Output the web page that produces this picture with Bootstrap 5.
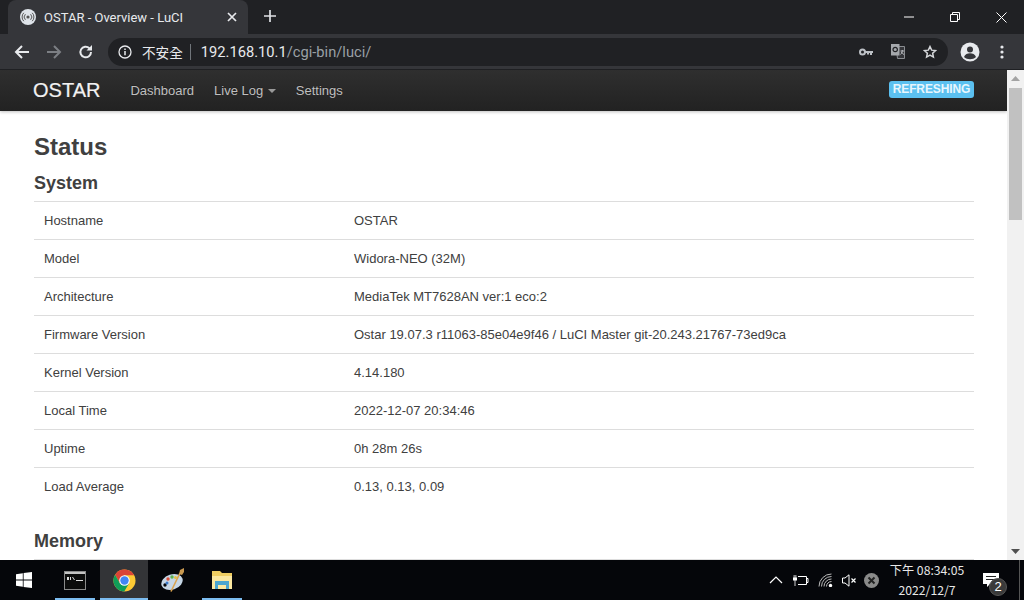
<!DOCTYPE html>
<html lang="en">
<head>
<meta charset="utf-8">
<title>OSTAR - Overview - LuCI</title>
<link href="https://cdn.jsdelivr.net/npm/bootstrap@5.3.0/dist/css/bootstrap.min.css" rel="stylesheet">
<style>
html,body{height:600px;overflow:hidden}
body{background:#fff;font-family:"Liberation Sans",Arial,sans-serif;color:#404040}
.shell{width:1024px;height:600px}
.tabstrip{height:34px;background:#202124;padding-left:8px}
.browser-tab{width:240px;height:34px;background:#35363a;border-radius:8px 8px 0 0;padding:0 11px 0 12px;color:#e8eaed;font:13px "Roboto","Liberation Sans",sans-serif}
.tab-title{width:183px;margin-left:8px;white-space:nowrap}
.newtab{width:28px;height:28px;margin-left:8px}
.win-btns{margin-left:auto}
.win-btn{width:46px;height:34px}
.toolbar{height:36px;background:#35363a;border-bottom:1px solid #1f2023;padding-left:7px}
.tool-btn{width:30px;height:30px}
.tool-gap{margin-left:2px}
.omni{width:840px;height:28px;background:#202124;border-radius:14px;margin:0 7px;padding:0 11px 0 10px;font:14.7px "Roboto","Liberation Sans",sans-serif;color:#9aa0a6;white-space:nowrap}
.omni-warn{font:13.6px "Noto Sans CJK TC","Noto Sans CJK SC",sans-serif;color:#e8eaed;margin-left:10px}
.omni-sep{width:1px;height:16px;background:#70757a;margin:0 10px 0 7px}
.omni-host{color:#e8eaed}
.omni-end{margin-left:auto;gap:18px}
.pagewrap{height:490px}
.pagemain{width:1007px;height:490px;overflow:hidden}
.luci-nav{height:41px;background:linear-gradient(#2f2f2f,#222);padding:0 33px;box-shadow:0 1px 3px rgba(0,0,0,.25);position:relative}
.luci-brand{font-size:20px;color:#f2f2f2;margin:0 30px 2px 0;-webkit-text-stroke:.2px #f2f2f2}
.luci-link{font-size:13px;color:#bfbfbf;margin-right:20px;text-decoration:none;text-shadow:0 -1px 0 rgba(0,0,0,.25)}
.luci-caret{display:inline-block;border-top:4px solid #999;border-left:4px solid transparent;border-right:4px solid transparent;vertical-align:2px;margin-left:1px}
.refresh-pill{margin:0 0 2px auto;background:#5bc0f0;color:#e8f6fd;font-size:12px;font-weight:700;border-radius:3px;padding:0 3px;height:17px;line-height:17px;width:85px;white-space:nowrap;letter-spacing:-.1px}
.content-area{padding:0 33px 0 34px}
.page-title{font-size:24px;font-weight:700;line-height:28px;margin:22px 0 11px;color:#404040}
.sect-title{font-size:18px;font-weight:700;line-height:22px;margin:0 0 7px;color:#404040}
.info-table{width:100%;margin-bottom:24px;font-size:13px;table-layout:fixed;border-collapse:collapse}
.info-table td{height:38px;padding:0 10px;border-top:1px solid #ddd;color:#404040;vertical-align:middle}
.info-table td:first-child{width:310px}
.vscroll{width:17px;height:490px;background:#f1f1f1}
.vscroll-track{flex:1}
.vscroll-cap{height:17px}
.vthumb{height:132px;background:#c1c1c1;width:13px;margin:1px 0 0 2px}
.taskbar{height:40px;background:#05060a}
.task-item{height:40px;width:48px;position:relative}
.task-run::after{content:"";position:absolute;left:4px;right:4px;bottom:0;height:2px;background:#7cbcf0}
.task-focus{background:#333437;margin-left:1px}
.task-focus::after{content:"";position:absolute;left:0;right:0;bottom:0;height:2px;background:#7cbcf0}
.task-cmd{margin-left:3px}
.task-paint{width:50px}
.tray{margin-left:auto;height:40px;color:#fff}
.tray-icon{margin-right:9px}
.tray-icon-tight{margin-right:7px}
.clock{width:94px;margin-left:-8px;text-align:center;font:12.2px/20px "Noto Sans CJK TC","Noto Sans CJK SC",sans-serif;color:#e8e8e8;white-space:nowrap}
.notif{width:34px;height:40px;position:relative}
.notif-badge{position:absolute;left:15px;top:18px;width:18px;height:18px;border-radius:50%;background:#3a3a3a;border:1px solid #555;color:#fff;font-size:13px;line-height:16px;text-align:center}
.show-desktop{width:5px;height:40px;margin-left:11px;border-left:1px solid #555}
</style>
</head>
<body>
<div class="shell d-flex flex-column">
  <div class="tabstrip d-flex align-items-end">
    <div class="browser-tab d-flex align-items-center">
      <svg width="16" height="16" viewBox="0 0 16 16"><circle cx="8" cy="8" r="8" fill="#dfe4ea"/><circle cx="8" cy="8" r="1.6" fill="#555"/><path d="M5.400 5.200a4 4 0 0 0 0 5.600M10.600 5.200a4 4 0 0 1 0 5.600M3.800 3.800a6 6 0 0 0 0 8.400M12.200 3.800a6 6 0 0 1 0 8.400" fill="none" stroke="#555" stroke-width="1"/></svg>
      <span class="tab-title">OSTAR - Overview - LuCI</span>
      <svg width="10" height="10" viewBox="0 0 10 10"><path d="M1 1l8 8M9 1l-8 8" stroke="#e8eaed" stroke-width="1.7"/></svg>
    </div>
    <div class="newtab d-flex align-items-center justify-content-center mb-1">
      <svg width="12" height="12" viewBox="0 0 12 12"><path d="M6 0v12M0 6h12" stroke="#dfe1e5" stroke-width="1.7"/></svg>
    </div>
    <div class="win-btns d-flex align-self-start">
      <div class="win-btn d-flex align-items-center justify-content-center"><svg width="10" height="10" viewBox="0 0 10 10"><path d="M0 5h10" stroke="#fff"/></svg></div>
      <div class="win-btn d-flex align-items-center justify-content-center"><svg width="10" height="10" viewBox="0 0 10 10"><path d="M.5 2.500h7v7h-7zM2.500 2.500v-2h7v7h-2" fill="none" stroke="#fff"/></svg></div>
      <div class="win-btn d-flex align-items-center justify-content-center"><svg width="11" height="11" viewBox="0 0 11 11"><path d="M.5.500l10 10M10.500.500l-10 10" stroke="#fff"/></svg></div>
    </div>
  </div>
  <div class="toolbar d-flex align-items-center">
    <div class="tool-btn d-flex align-items-center justify-content-center"><svg width="16" height="16" viewBox="0 0 16 16"><path d="M15 8H2M8 2L2 8l6 6" fill="none" stroke="#e8eaed" stroke-width="2"/></svg></div>
    <div class="tool-btn tool-gap d-flex align-items-center justify-content-center"><svg width="16" height="16" viewBox="0 0 16 16"><path d="M1 8h13M8 2l6 6-6 6" fill="none" stroke="#7c7f84" stroke-width="2"/></svg></div>
    <div class="tool-btn tool-gap d-flex align-items-center justify-content-center"><svg width="16" height="16" viewBox="0 0 16 16"><path d="M13 8a5.300 5.300 0 1 1-1.600-3.800" fill="none" stroke="#e8eaed" stroke-width="2"/><path d="M14 1v5.500H8.500z" fill="#e8eaed"/></svg></div>
    <div class="omni d-flex align-items-center">
      <svg width="14" height="14" viewBox="0 0 14 14"><circle cx="7" cy="7" r="6" fill="none" stroke="#e8eaed" stroke-width="1.300"/><path d="M7 6v4.200M7 3.500v1.500" stroke="#e8eaed" stroke-width="1.500"/></svg>
      <span class="omni-warn">不安全</span><span class="omni-sep"></span>
      <span><span class="omni-host">192.168.10.1</span>/cgi-bin/luci/</span>
      <div class="omni-end d-flex align-items-center">
        <svg width="14" height="8" viewBox="0 0 14 8"><circle cx="3.500" cy="4" r="2.500" fill="none" stroke="#bdc1c6" stroke-width="2"/><path d="M6 3h8v2h-1v2h-2V5h-1v1.500H8V5H6z" fill="#bdc1c6"/></svg>
        <svg width="14" height="15" viewBox="0 0 14 15"><path d="M5 2.500h8.500V14.500H6.500z" fill="#35363a" stroke="#8a8d91"/><rect x="0" y="0" width="8.500" height="11.500" fill="#a5a8ac"/><circle cx="4.200" cy="5.500" r="2.200" fill="none" stroke="#202124" stroke-width="1.200"/><path d="M9.500 7h3.500M11.300 6c0 2.500-1 3.800-1.800 4.500M10.500 8c.5 1 1.300 2 2.500 2.500" stroke="#c4c7cb" fill="none" stroke-width=".9"/></svg>
        <svg width="14" height="14" viewBox="0 0 16 16"><path d="M8 1.800l1.900 4.100 4.400.5-3.300 3 .9 4.400L8 11.600l-3.900 2.200.9-4.400-3.300-3 4.400-.5z" fill="none" stroke="#d5d7da" stroke-width="1.700"/></svg>
      </div>
    </div>
    <div class="tool-btn d-flex align-items-center justify-content-center"><svg width="20" height="20" viewBox="0 0 20 20"><circle cx="10" cy="10" r="9.500" fill="#e8eaed"/><circle cx="10" cy="7.500" r="3" fill="#35363a"/><path d="M4 15c1-3 3.500-3.800 6-3.800s5 .8 6 3.800c-1.500 1.500-3.800 2.200-6 2.200s-4.500-.7-6-2.200z" fill="#35363a"/></svg></div>
    <div class="tool-btn tool-gap d-flex align-items-center justify-content-center"><svg width="4" height="14" viewBox="0 0 4 14"><circle cx="2" cy="2" r="1.600" fill="#e8eaed"/><circle cx="2" cy="7" r="1.600" fill="#e8eaed"/><circle cx="2" cy="12" r="1.600" fill="#e8eaed"/></svg></div>
  </div>
  <div class="pagewrap d-flex">
    <div class="pagemain">
      <nav class="luci-nav d-flex align-items-center">
        <span class="luci-brand">OSTAR</span>
        <a class="luci-link" href="#">Dashboard</a>
        <a class="luci-link" href="#">Live Log <span class="luci-caret"></span></a>
        <a class="luci-link" href="#">Settings</a>
        <span class="refresh-pill text-center">REFRESHING</span>
      </nav>
      <div class="content-area">
        <h2 class="page-title">Status</h2>
        <h3 class="sect-title">System</h3>
        <table class="info-table">
          <tr><td>Hostname</td><td>OSTAR</td></tr>
          <tr><td>Model</td><td>Widora-NEO (32M)</td></tr>
          <tr><td>Architecture</td><td>MediaTek MT7628AN ver:1 eco:2</td></tr>
          <tr><td>Firmware Version</td><td>Ostar 19.07.3 r11063-85e04e9f46 / LuCI Master git-20.243.21767-73ed9ca</td></tr>
          <tr><td>Kernel Version</td><td>4.14.180</td></tr>
          <tr><td>Local Time</td><td>2022-12-07 20:34:46</td></tr>
          <tr><td>Uptime</td><td>0h 28m 26s</td></tr>
          <tr><td>Load Average</td><td>0.13, 0.13, 0.09</td></tr>
        </table>
        <h3 class="sect-title">Memory</h3>
        <table class="info-table"><tr><td></td><td></td></tr></table>
      </div>
    </div>
    <div class="vscroll d-flex flex-column">
      <div class="vscroll-cap d-flex align-items-center justify-content-center"><svg width="9" height="5" viewBox="0 0 9 5"><path d="M4.500 0L9 5H0z" fill="#a3a3a3"/></svg></div>
      <div class="vscroll-track"><div class="vthumb"></div></div>
      <div class="vscroll-cap d-flex align-items-center justify-content-center"><svg width="9" height="5" viewBox="0 0 9 5"><path d="M4.500 5L9 0H0z" fill="#505050"/></svg></div>
    </div>
  </div>
  <div class="taskbar d-flex">
    <div class="task-item d-flex align-items-center justify-content-center"><svg width="16" height="16" viewBox="0 0 16 16"><path d="M0 2.300l6.800-1v6.300H0zM7.600 1.100L16 0v7.600H7.600zM0 8.400h6.800v6.300L0 13.700zM7.600 8.400H16V16l-8.400-1.100z" fill="#fff"/></svg></div>
    <div class="task-item task-cmd task-run d-flex align-items-center justify-content-center"><svg width="22" height="19" viewBox="0 0 22 19"><rect x=".5" y=".5" width="21" height="18" fill="#0c0c0c" stroke="#8a8a8a"/><rect x="1" y="1" width="20" height="2" fill="#c4c4c4"/><path d="M3 6h2v3H3zM6 6h1v3H6zM8 6h1l2 3h-1zM12 9h7v1h-7z" fill="#ddd"/></svg></div>
    <div class="task-item task-focus d-flex align-items-center justify-content-center"><svg width="23" height="23" viewBox="0 0 24 24"><circle cx="12" cy="12" r="11.500" fill="#fcc934"/><path d="M12 6.500H22.100A11.500 11.500 0 0 0 2.180 6.010L7.240 14.750z" fill="#db4437"/><path d="M7.240 14.750L2.180 6.010A11.500 11.500 0 0 0 11.720 23.500L16.760 14.750z" fill="#0f9d58"/><circle cx="12" cy="12" r="5.500" fill="#fff"/><circle cx="12" cy="12" r="4.400" fill="#4285f4"/></svg></div>
    <div class="task-item task-paint d-flex align-items-center justify-content-center"><svg width="24" height="24" viewBox="0 0 24 24"><ellipse cx="11" cy="14" rx="11" ry="7.500" transform="rotate(-18 11 14)" fill="#c6d6e6"/><circle cx="4" cy="17" r="1.700" fill="#05060a"/><circle cx="7" cy="11" r="1.700" fill="#d8503c"/><circle cx="11" cy="9" r="1.700" fill="#5ab050"/><circle cx="14.500" cy="9.500" r="1.500" fill="#e4c040"/><circle cx="6" cy="15" r="1.500" fill="#3a78c8"/><path d="M10 23.500L19 5" stroke="#d9a24e" stroke-width="1.600"/><path d="M18 6l1-4 4-2 0 4-2 3z" fill="#c89850"/></svg></div>
    <div class="task-item task-run d-flex align-items-center justify-content-center"><svg width="20" height="18" viewBox="0 0 20 18"><path d="M0 0h8l2 2h10v16H0z" fill="#efcd62"/><path d="M0 5h20v13H0z" fill="#fbe7a0"/><path d="M3 10h14v8h-3v-4H6v4H3z" fill="#4ba5cf"/></svg></div>
    <div class="tray d-flex align-items-center">
      <svg class="tray-icon" width="14" height="8" viewBox="0 0 14 8"><path d="M1 7l6-6 6 6" fill="none" stroke="#fff" stroke-width="1.200"/></svg>
      <svg class="tray-icon" width="17" height="11" viewBox="0 0 17 11"><path d="M6 1.500h8.500v8H6M14.500 3.500h1.500v4h-1.500" fill="none" stroke="#fff"/><path d="M1 2.500h4v3H1zM1.700 0h.8v2.500h-.8zM3.500 0h.8v2.500h-.8zM2.600 5.500h.8V11h-.8z" fill="#fff"/></svg>
      <svg class="tray-icon" width="15" height="14" viewBox="0 0 15 14"><path d="M1 13.500A12.500 12.500 0 0 1 13.500 1M3.500 13.500a10 10 0 0 1 10-10M6 13.500a7.500 7.500 0 0 1 7.500-7.500M8.500 13.500a5 5 0 0 1 5-5" fill="none" stroke="#bbb" stroke-width="1"/><circle cx="12.500" cy="12.500" r="1.700" fill="#fff"/></svg>
      <svg class="tray-icon-tight" width="15" height="13" viewBox="0 0 15 13"><path d="M.5 4h2.500L7 .8v11.400L3 9H.5z" fill="none" stroke="#fff"/><path d="M9.500 4.500l4 4M13.500 4.500l-4 4" stroke="#fff" stroke-width="1.200"/></svg>
      <svg class="tray-icon" width="15" height="15" viewBox="0 0 15 15"><circle cx="7.500" cy="7.500" r="7.500" fill="#8a8a8a"/><path d="M4.500 4.500l6 6M10.500 4.500l-6 6" stroke="#222" stroke-width="2"/></svg>
      <div class="clock">下午 08:34:05<br>2022/12/7</div>
      <div class="notif d-flex align-items-center justify-content-center">
        <svg width="16" height="14" viewBox="0 0 16 14"><path d="M0 0h16v11H7l-3 3v-3H0z" fill="#fff"/><path d="M3 3.500h10M3 6.500h10" stroke="#222"/></svg>
        <span class="notif-badge">2</span>
      </div>
      <div class="show-desktop"></div>
    </div>
  </div>
</div>
<script src="https://cdn.jsdelivr.net/npm/bootstrap@5.3.0/dist/js/bootstrap.bundle.min.js"></script>
</body>
</html>
